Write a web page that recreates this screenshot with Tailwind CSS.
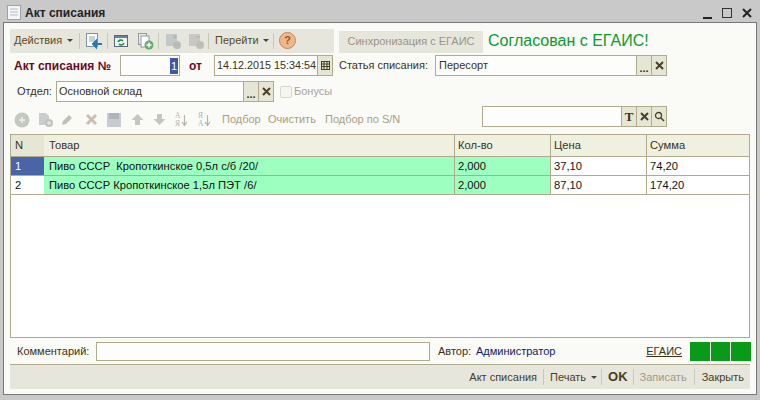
<!doctype html>
<html lang="ru">
<head>
<meta charset="UTF-8" />
<title>Акт списания</title>
<script src="https://cdn.jsdelivr.net/npm/@tailwindcss/browser@4"></script>
</head>
<body class="w-[760px] h-[400px] overflow-hidden bg-[#c9c9c9] font-['Liberation_Sans',sans-serif] text-[11px] whitespace-nowrap text-[#3c3218]">

<!-- title bar -->
<div class="h-[22px] flex items-center pl-[6px] pr-[6px] pt-[3px]">
  <svg width="17" height="17" viewBox="0 0 17 17"><rect x="1.5" y="1.5" width="13" height="14" fill="#f4f6f8" stroke="#9aa4ae"/><path d="M4 5h8M4 8h8M4 11h8" stroke="#b5bec6"/></svg>
  <span class="ml-[2px] font-bold text-[#222] text-[12px]">Акт списания</span>
  <div class="ml-auto flex items-center gap-[6px] h-[16px]">
    <svg width="14" height="14" viewBox="0 0 14 14"><rect x="3" y="11" width="9" height="2" fill="#222"/></svg>
    <svg width="14" height="14" viewBox="0 0 14 14"><rect x="2.5" y="2.5" width="9" height="9" fill="none" stroke="#333"/></svg>
    <svg width="14" height="14" viewBox="0 0 14 14"><path d="M3 3l8 8M11 3l-8 8" stroke="#222" stroke-width="2"/></svg>
  </div>
</div>

<!-- window content -->
<div class="mx-[3px] h-[373px] border border-[#777] bg-[#fafaf7] pl-[6px] pr-[5px] pt-[5px]">

  <!-- top toolbar -->
  <div class="flex items-center h-[25px]">
    <div class="w-[324px] h-[24px] bg-[#e6e6dd] flex items-center pl-[4px] text-[#5b4a1e]">
      <span class="w-[59px] flex items-center">Действия<i class="ml-auto border-x-[3px] border-t-[3px] border-x-transparent border-t-[#444]"></i></span>
      <i class="ml-[6px] w-px h-[16px] bg-[#c8c8b8]"></i>
      <svg class="ml-[5px]" width="18" height="18" viewBox="0 0 18 18"><rect x="1.5" y="1.5" width="11" height="13" fill="#fff" stroke="#7d8fa8"/><path d="M4 5h6M4 7h6M4 9h6" stroke="#8aa"/><path d="M17 12H8M8 12l3-3v6z" stroke="#2c78b0" stroke-width="2" fill="#2c78b0"/></svg>
      <i class="ml-[4px] w-px h-[16px] bg-[#c8c8b8]"></i>
      <svg class="ml-[5px]" width="16" height="16" viewBox="0 0 16 16"><rect x="1.5" y="2.5" width="13" height="11" fill="#eef3f5" stroke="#56697a"/><rect x="2" y="3" width="12" height="2" fill="#6b8296"/><path d="M5 9a3 3 0 0 1 5-1M11 10a3 3 0 0 1-5 1" fill="none" stroke="#2a8a3a" stroke-width="1.6"/></svg>
      <svg class="ml-[8px]" width="17" height="18" viewBox="0 0 17 18"><rect x="1.5" y="1.5" width="8" height="11" fill="#eee" stroke="#8b97a3"/><rect x="4" y="4" width="8" height="11" fill="#fff" stroke="#8b97a3"/><circle cx="12" cy="13" r="4.5" fill="#5fae6b"/><path d="M12 10.500v5M9.500 13h5" stroke="#fff" stroke-width="1.500"/></svg>
      <i class="ml-[4px] w-px h-[16px] bg-[#c8c8b8]"></i>
      <svg class="ml-[5px]" width="18" height="18" viewBox="0 0 18 18"><rect x="2" y="2" width="11" height="12" fill="#c3c9c9"/><circle cx="13" cy="13" r="4" fill="#b9bdb9"/><path d="M9 5l4 0M11 3v4" stroke="#9fb5a5"/></svg>
      <svg class="ml-[5px]" width="18" height="18" viewBox="0 0 18 18"><rect x="2" y="2" width="11" height="12" fill="#c9c6c6"/><circle cx="13" cy="13" r="4" fill="#bdbdb9"/><path d="M9 5h4" stroke="#c5a5a5"/></svg>
      <i class="ml-[3px] w-px h-[16px] bg-[#c8c8b8]"></i>
      <span class="ml-[6px] w-[54px] flex items-center">Перейти<i class="ml-auto border-x-[3px] border-t-[3px] border-x-transparent border-t-[#444]"></i></span>
      <i class="ml-[4px] w-px h-[16px] bg-[#c8c8b8]"></i>
      <span class="ml-[5px] w-[17px] h-[17px] rounded-full bg-[#eeb98a] border border-[#b98a60] flex items-center justify-center font-bold text-[11px] text-[#a4501c]">?</span>
    </div>
    <div class="ml-[5px] mt-[2px] w-[144px] h-[22px] bg-[#e6e6dd] flex items-center justify-center text-[#9c9484]">Синхронизация с ЕГАИС</div>
    <span class="ml-[5px] mt-[1px] text-[16px] text-[#0c9a2c]">Согласован с ЕГАИС!</span>
  </div>

  <!-- number, date, write-off item -->
  <div class="flex items-center h-[21px] mt-[2px]">
    <span class="ml-[4px] w-[106px] font-bold text-[12px] text-[#6b0a1e]">Акт списания №</span>
    <div class="w-[60px] h-[21px] border border-[#b0ab8c] bg-[#fdfdfb] flex items-center justify-end pr-[1px]"><span class="bg-[#3d5a9e] text-white leading-[16px] px-px">1</span></div>
    <span class="ml-[9px] w-[25px] font-bold text-[12px] text-[#6b0a1e]">от</span>
    <div class="w-[119px] h-[21px] border border-[#b0ab8c] bg-[#fdfdfb] flex items-center pl-[2px]">
      <span class="grow text-[10.8px]">14.12.2015 15:34:54</span>
      <span class="w-[15px] h-full bg-[#e6e6d5] border-l border-[#b0ab8c] flex items-center justify-center"><svg width="11" height="11" viewBox="0 0 11 11"><path d="M1 1.500h9M1 4h9M1 6.500h9M1 9.500h9M1.500 1v9M4 1v9M7 1v9M9.500 1v9" stroke="#4a4028"/></svg></span>
    </div>
    <span class="ml-[6px] w-[96px]">Статья списания:</span>
    <div class="w-[232px] h-[21px] border border-[#b0ab8c] bg-[#fdfdfb] flex items-center pl-[3px]">
      <span class="grow">Пересорт</span>
      <span class="w-[15px] h-full bg-[#e6e6d5] border-l border-[#b0ab8c] flex items-end justify-center font-bold text-[11px] leading-[14px]">...</span>
      <span class="w-[15px] h-full bg-[#e6e6d5] border-l border-[#b0ab8c] flex items-center justify-center"><svg width="9" height="9" viewBox="0 0 9 9"><path d="M1 1l7 7M8 1l-7 7" stroke="#4a4028" stroke-width="2"/></svg></span>
    </div>
  </div>

  <!-- department -->
  <div class="flex items-center h-[21px] mt-[5px]">
    <span class="ml-[7px] w-[39px]">Отдел:</span>
    <div class="w-[218px] h-[21px] border border-[#b0ab8c] bg-[#fdfdfb] flex items-center pl-[2px]">
      <span class="grow">Основной склад</span>
      <span class="w-[15px] h-full bg-[#e6e6d5] border-l border-[#b0ab8c] flex items-end justify-center font-bold text-[11px] leading-[14px]">...</span>
      <span class="w-[15px] h-full bg-[#e6e6d5] border-l border-[#b0ab8c] flex items-center justify-center"><svg width="9" height="9" viewBox="0 0 9 9"><path d="M1 1l7 7M8 1l-7 7" stroke="#4a4028" stroke-width="2"/></svg></span>
    </div>
    <span class="ml-[6px] w-[12px] h-[12px] rounded-[2px] border border-[#d8d8cc] bg-[#f6f6f0]"></span>
    <span class="ml-[2px] text-[#a8a498]">Бонусы</span>
  </div>

  <!-- table toolbar -->
  <div class="flex items-start h-[28px] mt-[4px]">
    <div class="w-[472px] h-[27px] flex items-center pl-[4px] text-[#a89f80]">
      <svg width="16" height="16" viewBox="0 0 16 16"><circle cx="8" cy="8" r="7.500" fill="#c4c8c0"/><path d="M8 5v6M5 8h6" stroke="#eee" stroke-width="1.500"/></svg>
      <svg class="ml-[7px]" width="17" height="16" viewBox="0 0 17 16"><path d="M2 1h7l3 3v9H2z" fill="#c9cdcf"/><circle cx="12" cy="11" r="4" fill="#c0c4bc"/><path d="M12 9v4M10 11h4" stroke="#eee"/></svg>
      <svg class="ml-[6px]" width="15" height="15" viewBox="0 0 15 15"><path d="M2 13l1-4 6-6 3 3-6 6z" fill="#bfc1b8"/></svg>
      <svg class="ml-[9px]" width="15" height="15" viewBox="0 0 15 15"><path d="M3 3l9 9M12 3l-9 9" stroke="#c9bfb5" stroke-width="3"/></svg>
      <svg class="ml-[7px]" width="16" height="16" viewBox="0 0 16 16"><rect x="1" y="1" width="14" height="14" fill="#c6ccd0"/><rect x="3" y="1" width="10" height="6" fill="#aeb5bb"/></svg>
      <svg class="ml-[8px]" width="15" height="15" viewBox="0 0 15 15"><path d="M7.500 2l6 6H10v5H5V8H1.500z" fill="#c3c7c3"/></svg>
      <svg class="ml-[7px]" width="15" height="15" viewBox="0 0 15 15"><path d="M7.500 13l6-6H10V2H5v5H1.500z" fill="#c3c7c3"/></svg>
      <span class="ml-[8px] w-[15px] h-[17px] flex items-center text-[#b5b5a8]">
        <span class="flex flex-col text-[7.5px] leading-[8px] font-['Liberation_Serif',serif]"><span>А</span><span>Я</span></span>
        <svg class="ml-[1px]" width="7" height="14" viewBox="0 0 7 14"><path d="M3.500 2v10M1 9l2.500 3.500L6 9" fill="none" stroke="#b5b5a8" stroke-width="1.200"/></svg>
      </span>
      <span class="ml-[8px] w-[15px] h-[17px] flex items-center text-[#b5b5a8]">
        <span class="flex flex-col text-[7.5px] leading-[8px] font-['Liberation_Serif',serif]"><span>Я</span><span>А</span></span>
        <svg class="ml-[1px]" width="7" height="14" viewBox="0 0 7 14"><path d="M3.500 2v10M1 9l2.500 3.500L6 9" fill="none" stroke="#b5b5a8" stroke-width="1.200"/></svg>
      </span>
      <span class="ml-[9px] w-[37px]">Подбор</span>
      <span class="ml-[9px] w-[47px]">Очистить</span>
      <span class="ml-[10px]">Подбор по S/N</span>
    </div>
    <div class="w-[185px] h-[21px] border border-[#b0ab8c] bg-[#fdfdfb] flex items-center justify-end">
      <span class="w-[15px] h-full bg-[#e6e6d5] border-l border-[#b0ab8c] flex items-center justify-center font-bold font-['Liberation_Serif',serif] text-[13px]">T</span>
      <span class="w-[15px] h-full bg-[#e6e6d5] border-l border-[#b0ab8c] flex items-center justify-center"><svg width="9" height="9" viewBox="0 0 9 9"><path d="M1 1l7 7M8 1l-7 7" stroke="#4a4028" stroke-width="2"/></svg></span>
      <span class="w-[15px] h-full bg-[#e6e6d5] border-l border-[#b0ab8c] flex items-center justify-center"><svg width="11" height="11" viewBox="0 0 11 11"><circle cx="4.500" cy="4.500" r="3" fill="none" stroke="#4a4028" stroke-width="1.300"/><path d="M7 7l3 3" stroke="#4a4028" stroke-width="1.600"/></svg></span>
    </div>
  </div>

  <!-- table -->
  <div class="w-[740px] h-[204px] border border-[#b0ab8c] bg-white text-[11.2px]">
    <div class="grid grid-cols-[33px_410px_96px_96px_1fr] h-[22px] bg-[#f0f0e0] border-b border-[#b0ab8c]">
      <div class="pl-[4px] flex items-center bg-[#e6e6d5]">N</div>
      <div class="pl-[5px] flex items-center">Товар</div>
      <div class="pl-[3px] flex items-center border-l border-[#b0ab8c]">Кол-во</div>
      <div class="pl-[3px] flex items-center border-l border-[#b0ab8c]">Цена</div>
      <div class="pl-[3px] flex items-center border-l border-[#b0ab8c]">Сумма</div>
    </div>
    <div class="grid grid-cols-[33px_410px_96px_96px_1fr] h-[19px] border-b border-[#b0ab8c] text-[#111]">
      <div class="pl-[4px] flex items-center bg-[#4a64a8] text-white">1</div>
      <div class="pl-[5px] flex items-center bg-[#9dffc0] whitespace-pre">Пиво СССР  Кропоткинское 0,5л с/б /20/</div>
      <div class="pl-[3px] flex items-center bg-[#9dffc0] border-l border-[#b0ab8c]">2,000</div>
      <div class="pl-[3px] flex items-center border-l border-[#b0ab8c]">37,10</div>
      <div class="pl-[3px] flex items-center border-l border-[#b0ab8c]">74,20</div>
    </div>
    <div class="grid grid-cols-[33px_410px_96px_96px_1fr] h-[19px] border-b border-[#b0ab8c] text-[#111]">
      <div class="pl-[4px] flex items-center">2</div>
      <div class="pl-[5px] flex items-center bg-[#9dffc0]">Пиво СССР Кропоткинское 1,5л ПЭТ /6/</div>
      <div class="pl-[3px] flex items-center bg-[#9dffc0] border-l border-[#b0ab8c]">2,000</div>
      <div class="pl-[3px] flex items-center border-l border-[#b0ab8c]">87,10</div>
      <div class="pl-[3px] flex items-center border-l border-[#b0ab8c]">174,20</div>
    </div>
  </div>

  <!-- comment and author -->
  <div class="flex items-center h-[19px] mt-[4px]">
    <span class="ml-[7px] w-[79px]">Комментарий:</span>
    <div class="w-[334px] h-[19px] border border-[#b0ab8c] bg-[#fdfdfb]"></div>
    <span class="ml-[8px] w-[38px]">Автор:</span>
    <span class="text-[#0c1a66]">Администратор</span>
    <span class="ml-auto mr-[8px] underline">ЕГАИС</span>
    <div class="w-[61px] h-[19px] grid grid-cols-3 gap-px">
      <div class="bg-[#0a9a1a]"></div><div class="bg-[#0a9a1a]"></div><div class="bg-[#0a9a1a]"></div>
    </div>
  </div>

  <!-- bottom bar -->
  <div class="w-[740px] h-[25px] mt-[3px] border-t border-[#b0ab8c] bg-[#e6e6dd] flex items-center justify-end pr-[6px] text-[#4a3e20]">
    <span>Акт списания</span>
    <i class="ml-[6px] w-px h-[16px] bg-[#c8c8b8]"></i>
    <span class="ml-[6px] flex items-center">Печать<i class="ml-[5px] border-x-[3px] border-t-[3px] border-x-transparent border-t-[#444]"></i></span>
    <i class="ml-[4px] w-px h-[16px] bg-[#c8c8b8]"></i>
    <span class="ml-[6px] font-bold text-[13px]">OK</span>
    <i class="ml-[5px] w-px h-[16px] bg-[#c8c8b8]"></i>
    <span class="ml-[6px] text-[#a09a88]">Записать</span>
    <i class="ml-[7px] w-px h-[16px] bg-[#c8c8b8]"></i>
    <span class="ml-[7px]">Закрыть</span>
  </div>
</div>
</body>
</html>
